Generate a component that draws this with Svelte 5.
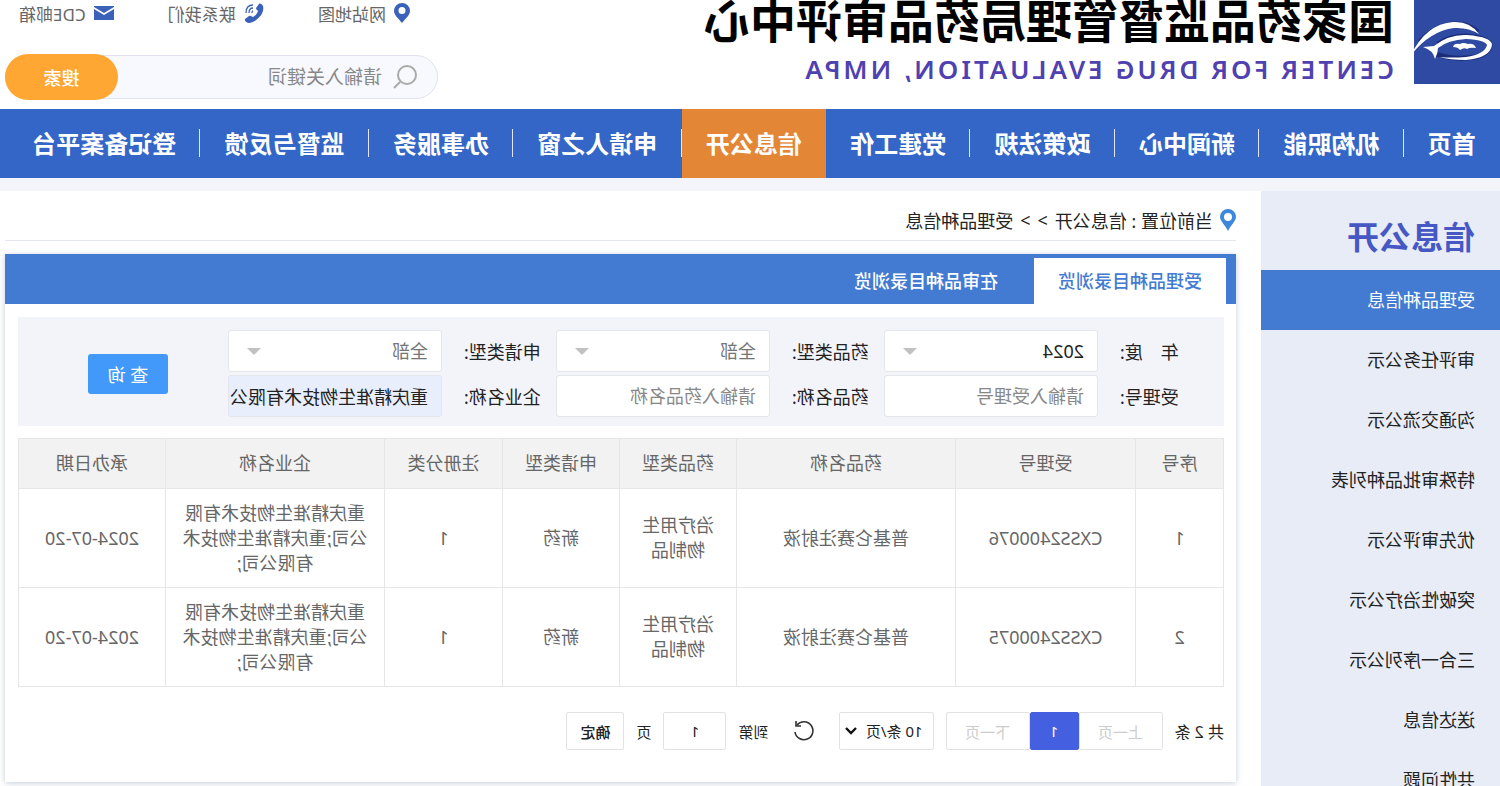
<script lang="ts">
  const navItems = [
    "首页",
    "机构职能",
    "新闻中心",
    "政策法规",
    "党建工作",
    "信息公开",
    "申请人之窗",
    "办事服务",
    "监督与反馈",
    "登记备案平台",
  ];

  const sideItems = [
    "受理品种信息",
    "审评任务公示",
    "沟通交流公示",
    "特殊审批品种列表",
    "优先审评公示",
    "突破性治疗公示",
    "三合一序列公示",
    "送达信息",
    "共性问题",
  ];

  const columns = [
    { title: "序号", width: 88 },
    { title: "受理号", width: 180 },
    { title: "药品名称", width: 219 },
    { title: "药品类型", width: 117 },
    { title: "申请类型", width: 117 },
    { title: "注册分类", width: 118 },
    { title: "企业名称", width: 219 },
    { title: "承办日期", width: 147 },
  ];
  const totalWidth = columns.reduce((sum, c) => sum + c.width, 0);

  const company = "重庆精准生物技术有限公司";
  const rows = ["CXSS2400076", "CXSS2400075"].map((code, i) => [
    String(i + 1),
    code,
    "普基仑赛注射液",
    "治疗用生物制品",
    "新药",
    "1",
    `${company};${company};`,
    "2024-07-20",
  ]);

  let keyword = $state("");
  let year = $state("2024");
  let drugType = $state("全部");
  let applyType = $state("全部");
  let acceptNo = $state("");
  let drugName = $state("");
  let companyName = $state(company);
  let pageNo = $state("1");
</script>

<div class="page">
  <header>
    <svg class="logo" viewBox="0 0 90 84" aria-hidden="true">
      <rect width="86" height="84" fill="#2f4aa3" />
      <g fill="none" stroke="#1b2d7a" stroke-width="5">
        <path d="M22 32Q32 23 46 24Q66 26 80 42" />
        <path d="M62 44Q50 36 34 36Q10 38 10 45Q12 57 34 58Q50 59 64 54" />
      </g>
      <path d="M21 34Q30 21 47 22Q74 24 89 55Q70 31 46 28Q32 27 21 34Z" fill="#fff" />
      <path
        d="M77 47L66 46Q51 34 33 35Q8 37 8 45Q10 58 34 60Q50 60 61 57Q48 58 34 57Q15 54 13 45Q15 40 34 39Q52 40 62 48Q62 53 65 59Q67 50 77 47Z"
        fill="#fff"
      />
      <path d="M24 48Q26 43 32 44Q37 42 40 44Q46 43 47 47Q42 47 40 50Q36 47 33 49Q30 47 24 48Z" fill="#fff" />
    </svg>
    <div class="brand">
      <h1>国家药品监督管理局药品审评中心</h1>
      <p>CENTER FOR DRUG EVALUATION, NMPA</p>
    </div>
    <div class="tools">
      <div class="quick">
        <a href="#map">
          <svg width="16" height="20" viewBox="0 0 16 20" fill="#3a62b8">
            <path fill-rule="evenodd" d="M8 0a8 8 0 0 1 8 8c0 4-4 7-8 12C4 15 0 12 0 8a8 8 0 0 1 8-8zm0 4a3 3 0 1 0 0 7 3 3 0 0 0 0-7z" />
          </svg>
          网站地图
        </a>
        <a href="#contact">
          <svg width="20" height="20" viewBox="0 0 20 20" fill="#3a62b8">
            <path d="M1 3C2 1 4 0 5 1l3 4c0 2-2 2-2 3 1 3 3 5 5 6 1 0 2-2 4-1l4 3c1 2-2 4-4 4C7 19-1 10 1 3z" />
            <path d="M11 5q4 0 4 5M11 2q7 0 7 8M11 8q1 0 1 2" fill="none" stroke="#3a62b8" stroke-width="1.3" />
          </svg>
          联系我们
        </a>
        <a href="#mail">
          <svg width="20" height="16" viewBox="0 0 20 16" fill="#3a62b8">
            <path d="M0 1h20v1l-10 6L0 2zM0 4l10 6 10-6v11H0z" />
          </svg>
          CDE邮箱
        </a>
      </div>
      <form class="search">
        <svg width="26" height="26" viewBox="0 0 26 26" fill="none" stroke="#aaa" stroke-width="2">
          <circle cx="11" cy="11" r="9" />
          <path d="M18 18l6 6" />
        </svg>
        <input aria-label="关键词" placeholder="请输入关键词" bind:value={keyword} />
        <button type="button">搜索</button>
      </form>
    </div>
  </header>

  <nav>
    {#each navItems as item (item)}
      <a href="#{item}" class:active={item === "信息公开"}>{item}</a>
    {/each}
  </nav>

  <div class="body">
    <aside>
      <h2>信息公开</h2>
      {#each sideItems as item, i (item)}
        <a href="#{item}" class:active={i === 0}>{item}</a>
      {/each}
    </aside>

    <main>
      <div class="crumb">
        <svg width="16" height="22" viewBox="0 0 16 22" fill="#3f87dc">
          <path fill-rule="evenodd" d="M8 0a8 8 0 0 1 8 8c0 4-5 8-8 14C5 16 0 12 0 8a8 8 0 0 1 8-8zm0 4a4 4 0 1 0 0 8 4 4 0 0 0 0-8z" />
        </svg>
        <span>当前位置 : 信息公开</span>
        <span>&gt;</span>
        <span>&gt;</span>
        <span>受理品种信息</span>
      </div>

      <section class="card">
        <div class="tabs">
          <button type="button" class="active">受理品种目录浏览</button>
          <button type="button">在审品种目录浏览</button>
        </div>

        <form class="filters">
          <div class="fields">
            <label for="year">年&emsp;度:</label>
            <div class="pick">
              <select id="year" class="chosen" bind:value={year}><option>2024</option></select>
            </div>
            <label for="drug-type">药品类型:</label>
            <div class="pick">
              <select id="drug-type" bind:value={drugType}><option>全部</option></select>
            </div>
            <label for="apply-type">申请类型:</label>
            <div class="pick">
              <select id="apply-type" bind:value={applyType}><option>全部</option></select>
            </div>
            <label for="accept-no">受理号:</label>
            <input id="accept-no" placeholder="请输入受理号" bind:value={acceptNo} />
            <label for="drug-name">药品名称:</label>
            <input id="drug-name" placeholder="请输入药品名称" bind:value={drugName} />
            <label for="company">企业名称:</label>
            <input id="company" class="filled" bind:value={companyName} />
          </div>
          <button type="button">查 询</button>
        </form>

        <table>
          <colgroup>
            {#each columns as c (c.title)}
              <col style="width: {(c.width / totalWidth) * 100}%" />
            {/each}
          </colgroup>
          <thead>
            <tr>
              {#each columns as c (c.title)}
                <th>{c.title}</th>
              {/each}
            </tr>
          </thead>
          <tbody>
            {#each rows as row (row[0])}
              <tr>
                {#each row as cell}
                  <td>{cell}</td>
                {/each}
              </tr>
            {/each}
          </tbody>
        </table>

        <div class="pager">
          <span class="total">共 2 条</span>
          <div class="pages">
            <button type="button" disabled>上一页</button>
            <button type="button" class="current">1</button>
            <button type="button" disabled>下一页</button>
          </div>
          <div class="size">
            <select aria-label="每页条数"><option>10 条/页</option></select>
            <svg width="12" height="8" viewBox="0 0 12 8" fill="none" stroke="#111" stroke-width="2.4">
              <path d="M1 1l5 5 5-5" />
            </svg>
          </div>
          <button type="button" class="reload" aria-label="刷新">
            <svg width="22" height="22" viewBox="0 0 22 22" fill="none" stroke="#333" stroke-width="1.6">
              <path d="M18 5A9 9 0 1 0 20 12" />
              <path d="M19 1v5h-5" />
            </svg>
          </button>
          <label for="page-no">到第</label>
          <input id="page-no" bind:value={pageNo} />
          <span>页</span>
          <button type="button" class="confirm">确定</button>
        </div>
      </section>
    </main>
  </div>
</div>

<style>
  :global(body) {
    margin: 0;
    background: #f3f5fb;
  }
  .page {
    transform: scaleX(-1);
    font-family: "Noto Sans", "Noto Sans CJK SC", sans-serif;
    font-size: 18px;
    color: #222;
  }
  .page * {
    box-sizing: border-box;
  }
  a {
    color: inherit;
    text-decoration: none;
  }
  button,
  input,
  select {
    margin: 0;
    font: inherit;
    color: inherit;
    border-radius: 0;
  }
  select {
    appearance: none;
  }

  header {
    display: flex;
    height: 109px;
    background: #fff;
  }
  .logo {
    width: 90px;
    height: 84px;
    margin-right: 16px;
  }
  .brand {
    flex: 1;
    white-space: nowrap;
  }
  h1 {
    margin: 0;
    font-size: 46px;
    line-height: 40px;
    font-weight: 700;
    color: #000;
  }
  .brand p {
    margin: 11px 0 0;
    font-size: 26px;
    line-height: 36px;
    font-weight: 600;
    letter-spacing: 3px;
    color: #4f41b0;
  }
  .tools {
    width: 433px;
    margin-right: 5px;
  }
  .quick {
    display: flex;
    justify-content: space-between;
    height: 26px;
    padding: 0 14px 0 28px;
    font-size: 17px;
    color: #666;
  }
  .quick a {
    display: flex;
    align-items: center;
    gap: 8px;
  }
  .search {
    display: flex;
    align-items: center;
    height: 44px;
    margin-top: 29px;
    padding-left: 19px;
    border: 1px solid #e0e2ee;
    border-radius: 22px;
    background: #f8f9fe;
  }
  .search input {
    flex: 1;
    min-width: 0;
    padding: 0 10px;
    border: 0;
    background: none;
    font-size: 19px;
  }
  .search button {
    width: 113px;
    height: 46px;
    margin-right: -1px;
    border: 0;
    border-radius: 23px;
    background: #ffa633;
    color: #fff;
    font-weight: 500;
  }

  nav {
    display: flex;
    height: 69px;
    padding-right: 8px;
    background: #3466c8;
    color: #fff;
    font-size: 24px;
    font-weight: 700;
    white-space: nowrap;
  }
  nav a {
    display: flex;
    flex: 1 0 auto;
    align-items: center;
    justify-content: center;
    padding: 0 24px 2px;
    background: linear-gradient(#dfe8fa, #dfe8fa) 0 20px / 1px 28px no-repeat;
  }
  nav a:first-child {
    background: none;
  }
  nav a.active {
    background: #e38736;
  }

  .body {
    display: flex;
    border-top: 13px solid #f3f5fb;
    background: #fff;
  }
  aside {
    width: 239px;
    background: #e7ecf6;
  }
  h2 {
    margin: 0;
    padding: 22px 25px 9px;
    font-size: 32px;
    line-height: 48px;
    color: #4558c4;
  }
  aside a {
    display: block;
    padding-left: 25px;
    line-height: 60px;
  }
  aside a.active {
    background: #437bd3;
    color: #fff;
  }

  main {
    flex: 1;
    min-width: 0;
    padding: 0 5px 0 25px;
  }
  .crumb {
    display: flex;
    align-items: center;
    gap: 7px;
    height: 50px;
    padding-top: 8px;
    border-bottom: 1px solid #e3e5ef;
  }
  .card {
    margin-top: 13px;
    padding-bottom: 32px;
    box-shadow: 0 1px 6px #c4cbdb;
  }
  .tabs {
    display: flex;
    gap: 12px;
    height: 50px;
    padding: 4px 10px 0;
    background: #437bd3;
  }
  .tabs button {
    padding: 0 24px 2px;
    border: 0;
    background: none;
    color: #fff;
    font-weight: 500;
  }
  .tabs button.active {
    background: #fff;
    color: #437bd3;
  }

  .filters {
    display: flex;
    align-items: center;
    justify-content: space-between;
    margin: 13px 13px 12px 12px;
    padding: 13px 56px 9px 12px;
    background: #f3f4fa;
  }
  .fields {
    display: grid;
    flex: 0 1 984px;
    grid-template-columns: repeat(3, 92px minmax(0, 1fr));
    row-gap: 3px;
    align-items: center;
    text-align: right;
    white-space: nowrap;
  }
  .fields input,
  .pick {
    margin-left: 22px;
  }
  .fields input,
  .fields select {
    height: 42px;
    padding: 0 0 0 13px;
    border: 1px solid #e4e6ea;
    border-radius: 3px;
    background: #fff;
  }
  .fields input {
    min-width: 0;
  }
  .fields select {
    width: 100%;
    color: #757575;
  }
  .fields select.chosen {
    color: #222;
  }
  .fields input.filled {
    background: #e8eefc;
  }
  .pick {
    position: relative;
  }
  .pick::after {
    content: "";
    position: absolute;
    top: 18px;
    right: 19px;
    border: 7px solid transparent;
    border-top-color: #c2c2c2;
    border-bottom: 0;
    pointer-events: none;
  }
  .filters > button {
    width: 80px;
    height: 40px;
    margin: 0 14px;
    border: 0;
    border-radius: 3px;
    background: #4399fa;
    color: #fff;
  }
  input::placeholder {
    color: #888;
  }

  table {
    width: calc(100% - 25px);
    margin-left: 12px;
    table-layout: fixed;
    border-collapse: collapse;
    line-height: 25px;
    text-align: center;
    color: #666;
  }
  th,
  td {
    padding: 12px 16px;
    border: 1px solid #e6e6e6;
    font-weight: 400;
    overflow-wrap: break-word;
  }
  th {
    background: #f2f2f2;
  }
  td {
    padding: 11px 16px;
    height: 99px;
  }
  td:nth-child(2),
  td:last-child {
    white-space: nowrap;
  }

  .pager {
    display: flex;
    align-items: center;
    gap: 12px;
    margin: 25px 12px 0;
    font-size: 15px;
    white-space: nowrap;
  }
  .pager .total {
    font-size: 16px;
  }
  .pages {
    display: flex;
  }
  .pager button,
  .pager input,
  .pager select {
    height: 38px;
    padding: 0;
    border: 1px solid #e2e2e2;
    border-radius: 2px;
    background: #fff;
  }
  .pages button {
    width: 84px;
  }
  .pages button:disabled {
    color: #ccc;
  }
  .pages button.current {
    width: 49px;
    border-color: #4460e0;
    background: #4460e0;
    color: #fff;
  }
  .size {
    position: relative;
  }
  .size select {
    width: 95px;
    padding-left: 10px;
  }
  .size svg {
    position: absolute;
    top: 15px;
    right: 6px;
    pointer-events: none;
  }
  .pager button.reload {
    display: flex;
    align-items: center;
    margin: 0 12px;
    border: 0;
  }
  .pager input {
    width: 63px;
    text-align: center;
  }
  .pager button.confirm {
    width: 58px;
    font-weight: 500;
  }
</style>
